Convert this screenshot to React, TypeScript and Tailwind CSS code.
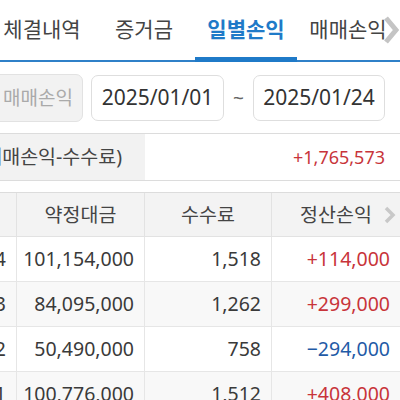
import React from 'react';

const font = { fontFamily: '"Noto Sans", "Noto Sans CJK KR", sans-serif' };

const tabs = ['체결내역', '증거금', '일별손익', '매매손익'];

const rows = [
  { date: '01/24', amount: '101,154,000', fee: '1,518', pnl: '+114,000' },
  { date: '01/23', amount: '84,095,000', fee: '1,262', pnl: '+299,000' },
  { date: '01/22', amount: '50,490,000', fee: '758', pnl: '−294,000' },
  { date: '01/21', amount: '100,776,000', fee: '1,512', pnl: '+408,000' },
];

export default function App() {
  return (
    <div className="w-[400px] h-[400px] overflow-hidden bg-white text-[#333]" style={font}>
      {/* Tabs */}
      <div className="relative h-[62px] border-b-2 border-[#2f80c8]">
        <div className="flex h-full -ml-[9px]">
          {tabs.map((t, i) => (
            <div key={t} className="relative w-[102px] shrink-0 flex items-center justify-center">
              <span
                className={
                  i === 2
                    ? 'text-[21px] font-bold text-[#1f7ac8] whitespace-nowrap'
                    : 'text-[21px] text-[#444] whitespace-nowrap'
                }
              >
                {t}
              </span>
              {i === 2 && <div className="absolute left-0 right-0 -bottom-[2px] h-[5px] bg-[#1f7ac8]" />}
            </div>
          ))}
        </div>
        <div className="absolute right-0 top-[14px] w-[18px] h-[32px] flex items-center justify-center">
          <svg width="16" height="30" viewBox="0 0 16 30">
            <polyline points="3,3 13,15 3,27" fill="none" stroke="#c4c4c4" strokeWidth="5" strokeLinejoin="miter" />
          </svg>
        </div>
      </div>

      {/* Filter row */}
      <div className="flex items-center pt-[12px] pb-[11px] border-b border-[#dcdcdc]">
        <div className="-ml-3 w-[95px] h-[48px] shrink-0 rounded-[7px] border border-[#e2e2e2] bg-[#f2f2f2] flex items-center justify-end pr-[9px]">
          <span className="text-[19px] text-[#aaa] whitespace-nowrap">매매손익</span>
        </div>
        <div className="ml-2 w-[133px] h-[46px] shrink-0 rounded-[7px] border border-[#dedede] flex items-center justify-center">
          <span className="text-[21px] text-[#333]">2025/01/01</span>
        </div>
        <div className="w-[29px] shrink-0 text-center text-[19px] text-[#666]">~</div>
        <div className="w-[132px] h-[46px] shrink-0 rounded-[7px] border border-[#dedede] flex items-center justify-center">
          <span className="text-[21px] text-[#333]">2025/01/24</span>
        </div>
      </div>

      {/* Summary */}
      <div className="flex h-[47px] border-b border-[#dcdcdc]">
        <div className="w-[145px] shrink-0 bg-[#f2f2f2] overflow-hidden flex items-center justify-end pr-[23px]">
          <span className="text-[19.5px] text-[#444] whitespace-nowrap">실현손익(매매손익-수수료)</span>
        </div>
        <div className="flex-1 flex items-center justify-end pr-[15px]">
          <span className="text-[18px] text-[#c8343a]">+1,765,573</span>
        </div>
      </div>

      {/* Table */}
      <div className="mt-[11px] border-t border-[#dcdcdc]">
        <div className="grid grid-cols-[17px_128px_127px_128px] h-[44px] bg-[#f3f3f3] border-b border-[#e2e2e2] text-[19.5px] text-[#444]">
          <div className="border-r border-[#e2e2e2]" />
          <div className="flex items-center justify-center border-r border-[#e2e2e2]">약정대금</div>
          <div className="flex items-center justify-center border-r border-[#e2e2e2]">수수료</div>
          <div className="relative flex items-center justify-center">
            정산손익
            <svg className="absolute right-[4px] top-[13px]" width="12" height="18" viewBox="0 0 12 18">
              <polyline points="2,2 9,9 2,16" fill="none" stroke="#c8c8c8" strokeWidth="3.5" />
            </svg>
          </div>
        </div>
        {rows.map((r, i) => (
          <div
            key={r.date}
            className={
              i % 2 === 1
                ? 'grid grid-cols-[17px_128px_127px_128px] h-[45px] bg-[#f8f8f8] border-b border-[#e6e6e6] text-[19.5px] text-[#3a3a3a]'
                : 'grid grid-cols-[17px_128px_127px_128px] h-[45px] bg-white border-b border-[#e6e6e6] text-[19.5px] text-[#3a3a3a]'
            }
          >
            <div className="overflow-hidden flex items-center justify-end pr-[10px] border-r border-[#e6e6e6] whitespace-nowrap">{r.date}</div>
            <div className="flex items-center justify-end pr-[10px] border-r border-[#e6e6e6]">{r.amount}</div>
            <div className="flex items-center justify-end pr-[10px] border-r border-[#e6e6e6]">{r.fee}</div>
            <div
              className={
                r.pnl.startsWith('+')
                  ? 'flex items-center justify-end pr-[10px] text-[#c8343a]'
                  : 'flex items-center justify-end pr-[10px] text-[#1f5aa6]'
              }
            >
              {r.pnl}
            </div>
          </div>
        ))}
      </div>
    </div>
  );
}
